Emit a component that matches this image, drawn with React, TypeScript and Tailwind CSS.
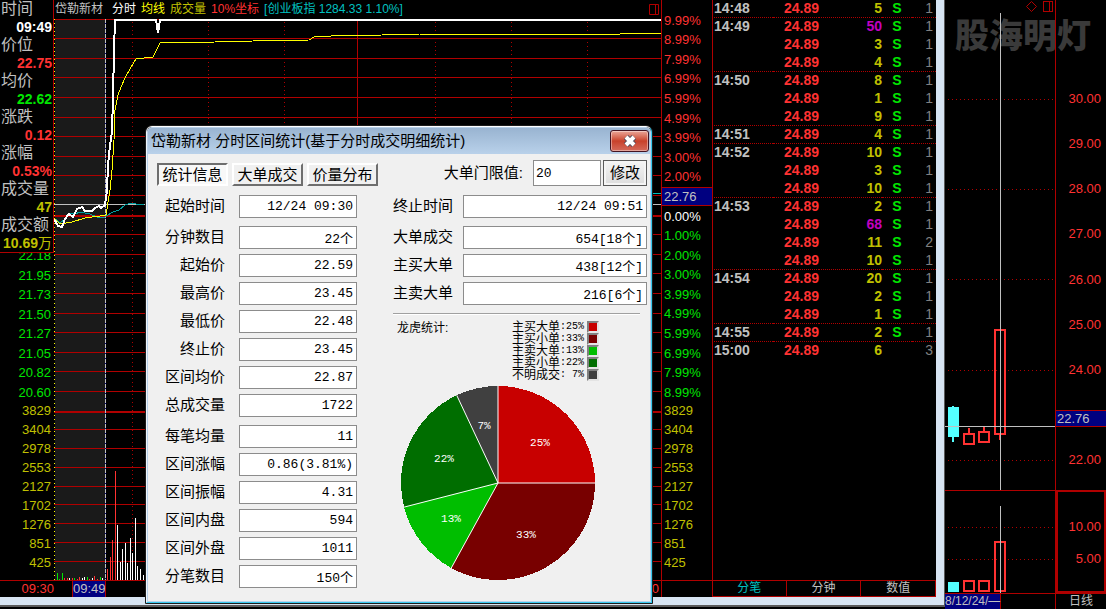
const pctLabels = [
  { text: '9.99%', tone: 'text-[#ff3232]' },
  { text: '8.99%', tone: 'text-[#ff3232]' },
  { text: '7.99%', tone: 'text-[#ff3232]' },
  { text: '6.99%', tone: 'text-[#ff3232]' },
  { text: '5.99%', tone: 'text-[#ff3232]' },
  { text: '4.99%', tone: 'text-[#ff3232]' },
  { text: '3.99%', tone: 'text-[#ff3232]' },
  { text: '3.00%', tone: 'text-[#ff3232]' },
  { text: '2.00%', tone: 'text-[#ff3232]' },
  { text: '22.76', tone: 'border-y border-[#b00000] bg-[#000080] text-[#c0c0c0]' },
  { text: '0.00%', tone: 'text-white' },
  { text: '1.00%', tone: 'text-[#00e600]' },
  { text: '2.00%', tone: 'text-[#00e600]' },
  { text: '3.00%', tone: 'text-[#00e600]' },
  { text: '3.99%', tone: 'text-[#00e600]' },
  { text: '4.99%', tone: 'text-[#00e600]' },
  { text: '5.99%', tone: 'text-[#00e600]' },
  { text: '6.99%', tone: 'text-[#00e600]' },
  { text: '7.99%', tone: 'text-[#00e600]' },
  { text: '8.99%', tone: 'text-[#00e600]' },
];

const lowPrices = ['21.95', '21.73', '21.50', '21.27', '21.05', '20.82', '20.60'];
const volLabels = ['3829', '3404', '2978', '2553', '2127', '1702', '1276', '851', '425'];

const quote = [
  { label: '时间', value: '09:49', unit: '', tone: 'text-white' },
  { label: '价位', value: '22.75', unit: '', tone: 'text-[#ff3232]' },
  { label: '均价', value: '22.62', unit: '', tone: 'text-[#00e600]' },
  { label: '涨跌', value: '0.12', unit: '', tone: 'text-[#ff3232]' },
  { label: '涨幅', value: '0.53%', unit: '', tone: 'text-[#ff3232]' },
  { label: '成交量', value: '47', unit: '', tone: 'text-[#c0c000]' },
  { label: '成交额', value: '10.69', unit: '万', tone: 'text-[#c0c000]' },
];

// time, volume, side, count, last row of its minute
const ticks: [string, number, string, number, boolean][] = [
  ['14:48', 5, 'S', 1, true],
  ['14:49', 50, 'S', 1, false],
  ['', 3, 'S', 1, false],
  ['', 4, 'S', 1, true],
  ['14:50', 8, 'S', 1, false],
  ['', 1, 'S', 1, false],
  ['', 9, 'S', 1, true],
  ['14:51', 4, 'S', 1, true],
  ['14:52', 10, 'S', 1, false],
  ['', 3, 'S', 1, false],
  ['', 10, 'S', 1, true],
  ['14:53', 2, 'S', 1, false],
  ['', 68, 'S', 1, false],
  ['', 11, 'S', 2, false],
  ['', 10, 'S', 1, true],
  ['14:54', 20, 'S', 1, false],
  ['', 2, 'S', 1, false],
  ['', 1, 'S', 1, true],
  ['14:55', 2, 'S', 1, true],
  ['15:00', 6, '', 3, false],
];

const leftFields = [
  [['起始时间', '12/24 09:30']],
  [
    ['分钟数目', '22个'],
    ['起始价', '22.59'],
    ['最高价', '23.45'],
    ['最低价', '22.48'],
    ['终止价', '23.45'],
    ['区间均价', '22.87'],
    ['总成交量', '1722'],
  ],
  [
    ['每笔均量', '11'],
    ['区间涨幅', '0.86(3.81%)'],
    ['区间振幅', '4.31'],
    ['区间内盘', '594'],
    ['区间外盘', '1011'],
    ['分笔数目', '150个'],
  ],
];

const rightFields = [
  [['终止时间', '12/24 09:51']],
  [
    ['大单成交', '654[18个]'],
    ['主买大单', '438[12个]'],
    ['主卖大单', '216[6个]'],
  ],
];

const slices = [
  { name: '主买大单', pct: 25, color: '#c80000', swatch: 'bg-[#c80000]', x: 140, y: 58 },
  { name: '主买小单', pct: 33, color: '#780000', swatch: 'bg-[#780000]', x: 126, y: 150 },
  { name: '主卖大单', pct: 13, color: '#00be00', swatch: 'bg-[#00be00]', x: 51, y: 134 },
  { name: '主卖小单', pct: 22, color: '#006e00', swatch: 'bg-[#006e00]', x: 44, y: 74 },
  { name: '不明成交', pct: 7, color: '#404040', swatch: 'bg-[#404040]', x: 84, y: 41 },
];

const gridRows = [
  38, 58, 77, 97, 117, 136, 156, 175, 195, 234, 254, 273, 293, 313, 332, 352, 371, 391, 429, 448,
  467, 486, 504, 523, 542, 561,
];

// x, height, colour
const volumeBars: [number, number, string][] = [
  [57, 7, '#00e600'],
  [59, 1, '#00e600'],
  [62, 7, '#00e600'],
  [64, 2, '#ff3232'],
  [67, 2, '#ff3232'],
  [69, 2, '#ffffff'],
  [72, 2, '#ff3232'],
  [74, 2, '#00e600'],
  [77, 1, '#ff3232'],
  [79, 3, '#ff3232'],
  [82, 2, '#ffffff'],
  [84, 3, '#ffffff'],
  [87, 3, '#00e600'],
  [89, 1, '#ff3232'],
  [92, 2, '#ffffff'],
  [94, 4, '#ff3232'],
  [97, 1, '#ff3232'],
  [100, 3, '#00e600'],
  [102, 2, '#ffffff'],
  [107, 11, '#ff3232'],
  [110, 23, '#ff3232'],
  [112, 40, '#ff3232'],
  [115, 109, '#ff3232'],
  [117, 55, '#ffffff'],
  [120, 18, '#ffffff'],
  [122, 31, '#ffffff'],
  [125, 37, '#ffffff'],
  [127, 17, '#ffffff'],
  [130, 42, '#ffffff'],
  [132, 27, '#ffffff'],
  [135, 62, '#ffffff'],
  [137, 14, '#ffffff'],
  [140, 11, '#ffffff'],
  [143, 5, '#ffffff'],
];

const IntradayChart = () => (
  <svg
    viewBox="54 18 607 562"
    preserveAspectRatio="none"
    shapeRendering="crispEdges"
    className="block min-h-0 w-full flex-1"
  >
    <rect x="55" y="19" width="50" height="561" fill="#1a1a1a" />
    {gridRows.map((y) => (
      <rect key={y} x="54" y={y} width="607" height="1" fill="#b00000" />
    ))}
    <rect x="54" y="19" width="607" height="1" fill="#b00000" />
    <rect x="54" y="215" width="607" height="2" fill="#b00000" />
    <rect x="54" y="411" width="607" height="2" fill="#b00000" />
    <rect x="357" y="20" width="1" height="560" fill="#b00000" />
    {[132, 208, 284, 435, 511, 587].map((x) => (
      <line key={x} x1={x + 0.5} x2={x + 0.5} y1="22" y2="580" stroke="#b00000" strokeDasharray="1 3" />
    ))}
    {volumeBars.map(([x, h, color]) => (
      <rect key={x} x={x} y={580 - h} width="1" height={h} fill={color} />
    ))}
    <line x1="54.5" x2="54.5" y1="19" y2="580" stroke="#ffff00" strokeDasharray="1 3" />
    <rect x="105" y="19" width="1" height="561" fill="#000080" />
    <line x1="105.5" x2="105.5" y1="19" y2="580" stroke="#c0c0c0" strokeDasharray="4 1" />
    <rect x="54" y="204" width="607" height="1" fill="#c0c0c0" />
    <rect x="652" y="193" width="9" height="1" fill="#00c0c0" />
    <polyline
      fill="none"
      stroke="#00a0a0"
      points="54,218 60,223 64,220 70,213 75,214 80,212 90,214 97,217 103,218 108,215 113,212 119,210 125,205 131,203 136,204 144,204"
    />
    <polyline
      fill="none"
      stroke="#ffff00"
      points="54,218 60,224 72,222 85,218 100,216 106,215 110,190 112,170 114,140 115,110 118,95 121,87 125,78 130,69 136,59 153,57 158,47 160,43 215,42 253,41 309,40 314,37 331,36 382,35 420,34 620,34 661,33"
    />
    <polyline
      fill="none"
      stroke="#ffffff"
      strokeWidth="2"
      points="54,219 58,226 62,227 65,219 69,214 73,217 77,209 82,207 85,211 92,211 95,208 99,206 101,208 105,205 107,190 108,165 110,145 112,132 113,97 114,50 115,20 156,20 158,33 160,20 661,20"
    />
  </svg>
);

const DailyChart = () => (
  <svg
    viewBox="945 0 110 593"
    preserveAspectRatio="none"
    shapeRendering="crispEdges"
    className="block h-full min-w-0 flex-1"
  >
    {[99, 189, 279, 370, 460, 527, 559].map((y) => (
      <line key={y} x1="948" x2="1055" y1={y + 0.5} y2={y + 0.5} stroke="#b00000" strokeDasharray="1 3" />
    ))}
    <rect x="945" y="490" width="110" height="1" fill="#b00000" />
    <path d="M1031.5 1.5l5 5-5 5-5-5z" fill="none" stroke="#b00000" shapeRendering="auto" />
    <path d="M1043.5 1.5h9v10h-9zM1049.5 1.5v10" fill="none" stroke="#b00000" />
    <rect x="948" y="407" width="11" height="30" fill="#54ffff" />
    <rect x="952" y="406" width="2" height="36" fill="#54ffff" />
    <path
      d="M964 434h10v10h-10zM979 432h10v10h-10zM995 330h10v104h-10zM969 428v6M984 426v6M1000 434v6"
      fill="none"
      stroke="#ff3232"
      strokeWidth="2"
    />
    <rect x="948" y="582" width="11" height="10" fill="#54ffff" />
    <path
      d="M964 581h10v10h-10zM979 581h10v10h-10zM995 542h10v49h-10z"
      fill="none"
      stroke="#ff3232"
      strokeWidth="2"
    />
    <rect x="1000" y="13" width="1" height="477" fill="#c0c0c0" />
    <rect x="1000" y="506" width="1" height="87" fill="#c0c0c0" />
    <rect x="945" y="426" width="110" height="1" fill="#c0c0c0" />
  </svg>
);

const point = (pct: number) => {
  const a = (pct / 100) * Math.PI * 2;
  return `${98 + 97 * Math.sin(a)} ${98 - 97 * Math.cos(a)}`;
};

const Pie = () => {
  let start = 0;
  return (
    <svg viewBox="0 0 196 196" className="mt-1 ml-[7px] block w-[196px]">
      {slices.map((s) => {
        const from = start;
        start += s.pct;
        return (
          <path
            key={s.name}
            d={`M98 98L${point(from)}A97 97 0 0 1 ${point(start)}Z`}
            fill={s.color}
            shapeRendering="crispEdges"
          />
        );
      })}
      {[0, 25, 58, 71, 93].map((p) => (
        <path key={p} d={`M98 98L${point(p)}`} stroke="#ffffff" />
      ))}
      {slices.map((s) => (
        <text key={s.name} x={s.x} y={s.y + 3} textAnchor="middle" fill="#ffffff" className="font-['Liberation_Mono',monospace] text-[11px]">
          {s.pct}%
        </text>
      ))}
    </svg>
  );
};

type FieldsProps = { groups: string[][][]; labelClass: string; inputClass: string };

const Fields = ({ groups, labelClass, inputClass }: FieldsProps) => (
  <div className="flex flex-col gap-2">
    {groups.map((group, i) => (
      <div key={i} className="flex flex-col gap-[5px]">
        {group.map(([label, value]) => (
          <div key={label} className="flex h-[23px] items-center justify-between">
            <label htmlFor={`f-${label}-${i}`} className={labelClass}>
              {label}
            </label>
            <input
              id={`f-${label}-${i}`}
              readOnly
              value={value}
              className={`h-full border border-[#8c8c8c] bg-white pr-[3px] text-right font-['Liberation_Mono','Noto_Sans_CJK_SC',monospace] text-[13px] leading-4 outline-none ${inputClass}`}
            />
          </div>
        ))}
      </div>
    ))}
  </div>
);

const StatsDialog = () => (
  <div
    role="dialog"
    aria-labelledby="dlg-title"
    className="absolute top-[125px] left-[145px] z-10 w-[508px] rounded-t-[7px] border border-[#1c1c1c] text-[15px] text-black"
  >
    <div className="rounded-t-[6px] border border-t-white border-r-[#35c8ee] border-b-[#35c8ee] border-l-[#eef5fc]">
      <div className="rounded-t-[5px] border border-[#b9d1ea] bg-[#f0f0f0]">
        <div className="flex h-[26px] items-center justify-between rounded-t-[4px] bg-linear-to-b from-[#99b4d1] to-[#b9d1ea] pr-px pl-[3px]">
          <h2 id="dlg-title">岱勒新材 分时区间统计(基于分时成交明细统计)</h2>
          <button
            aria-label="关闭"
            className="flex h-[22px] w-[39px] items-center justify-center rounded-[3px] border border-[#431422] bg-linear-to-b from-[#e9a698] via-[#c8402a] via-50% to-[#d4695a] shadow-[inset_0_0_0_1px_rgba(255,255,255,0.4)]"
          >
            <svg viewBox="0 0 16 14" className="h-[14px] w-4">
              <path d="M4 3l8 8M12 3l-8 8" stroke="#4a4a5c" strokeWidth="6" />
              <path d="M4 3l8 8M12 3l-8 8" stroke="#ffffff" strokeWidth="4" />
            </svg>
          </button>
        </div>
        <div className="pt-[6px] pr-[3px] pb-[13px] pl-[9px]">
          <div className="flex items-end justify-between">
            <div className="flex gap-1">
              <button className="h-[23px] w-[71px] border-2 border-t-[#6e6e6e] border-r-white border-b-white border-l-[#6e6e6e] bg-[#f8f8f8] leading-[18px]">
                统计信息
              </button>
              <button className="h-[23px] w-[71px] border-2 border-t-white border-r-[#6e6e6e] border-b-[#6e6e6e] border-l-white leading-[18px]">
                大单成交
              </button>
              <button className="h-[23px] w-[71px] border-2 border-t-white border-r-[#6e6e6e] border-b-[#6e6e6e] border-l-white leading-[18px]">
                价量分布
              </button>
            </div>
            <div className="flex h-[26px] items-center">
              <label htmlFor="limit" className="mr-[10px]">
                大单门限值:
              </label>
              <input
                id="limit"
                defaultValue="20"
                className="mr-[2px] h-[26px] w-[68px] border border-[#8c8c8c] bg-white px-[2px] font-['Liberation_Mono',monospace] text-[13px] outline-none"
              />
              <button className="h-[26px] w-11 border border-[#5a5a5a] bg-linear-to-b from-[#f4f4f4] to-[#dcdcdc] leading-[20px] shadow-[inset_0_0_0_2px_#f4f4f4]">
                修改
              </button>
            </div>
          </div>
          <div className="mt-[9px] flex justify-between">
            <div className="w-[200px]">
              <Fields groups={leftFields} labelClass="w-[68px] text-right" inputClass="w-[118px]" />
            </div>
            <div className="w-[254px]">
              <Fields groups={rightFields} labelClass="w-[60px] text-left" inputClass="w-[184px]" />
              <hr className="mt-2 mr-[7px] border-t border-b border-t-[#a0a0a0] border-b-white" />
              <div className="mt-[6px] flex justify-between pr-12 pl-1 text-xs leading-3">
                <span className="py-px">龙虎统计:</span>
                <ul>
                  {slices.map((s) => (
                    <li key={s.name} className="flex h-3 items-center">
                      <span>{s.name}</span>
                      <span className="font-['Liberation_Mono',monospace] text-[10px]">:</span>
                      <span className="w-[18px] text-right font-['Liberation_Mono',monospace] text-[10px]">{s.pct}%</span>
                      <i className={`ml-[3px] size-3 border-2 border-t-[#808080] border-r-[#e4e4e4] border-b-[#e4e4e4] border-l-[#808080] ${s.swatch}`} />
                    </li>
                  ))}
                </ul>
              </div>
              <Pie />
            </div>
          </div>
        </div>
      </div>
    </div>
  </div>
);

const QuotePanel = () => (
  <aside className="flex w-[54px] shrink-0 flex-col">
    <dl className="h-[253px] border-r border-b border-[#b00000]">
      {quote.map((q) => (
        <div key={q.label} className="whitespace-nowrap">
          <dt className="pl-px text-base leading-[18px] text-[#c0c0c0]">{q.label}</dt>
          <dd className={`flex justify-end pr-px text-sm leading-[18px] font-bold ${q.tone}`}>
            {q.value}
            <span className="font-normal">{q.unit}</span>
          </dd>
        </div>
      ))}
    </dl>
    <div className="flex min-h-0 flex-[149_1_0px] flex-col justify-between pr-[3px] text-right text-[#00e600]">
      <span className="flex h-3 items-end justify-end overflow-hidden leading-[19px]">22.18</span>
      {lowPrices.map((p) => (
        <span key={p} className="h-[19px] leading-[19px]">
          {p}
        </span>
      ))}
    </div>
    <div className="flex min-h-0 flex-[170_1_0px] flex-col justify-between pr-[3px] pb-2 text-right text-[#c0c000]">
      {volLabels.map((v) => (
        <span key={v} className="h-[18px] leading-[18px]">
          {v}
        </span>
      ))}
    </div>
  </aside>
);

const TickList = () => (
  <div className="w-[224px] shrink-0 border-l border-[#b00000] pl-px font-bold">
    <table className="w-full table-fixed border-separate border-spacing-0 text-sm leading-[17px]">
      <colgroup>
        <col className="w-[59px]" />
        <col className="w-[46px]" />
        <col className="w-[63px]" />
        <col className="w-[30px]" />
        <col />
      </colgroup>
      <tbody>
        {ticks.map(([time, vol, side, count, last], i) => (
          <tr
            key={i}
            className={
              last
                ? '*:border-b *:border-dotted *:border-[#b00000]'
                : '*:border-b *:border-transparent'
            }
          >
            <td className="h-[18px] text-[#c0c0c0]">{time}</td>
            <td className="text-right text-[#ff3232]">24.89</td>
            <td className={vol >= 50 ? 'text-right text-[#c000c0]' : 'text-right text-[#c0c000]'}>{vol}</td>
            <td className="text-center text-[#00e600]">{side}</td>
            <td className="pr-[3px] text-right font-normal text-[#808080]">{count}</td>
          </tr>
        ))}
      </tbody>
    </table>
  </div>
);

const DailyPanel = () => (
  <section className="relative flex w-[161px] shrink-0 flex-col">
    <div className="absolute top-3 left-[10px] text-[34px] leading-[48px] font-black whitespace-nowrap text-[#3a3a3a]">
      股海明灯
    </div>
    <div className="relative flex min-h-0 flex-1">
      <DailyChart />
      <div className="flex w-[51px] shrink-0 flex-col border-l border-[#b00000] text-right text-[#ff3232]">
        <div className="flex flex-[381_1_0px] flex-col justify-between pt-[89px] pr-[5px] pb-5">
          {['30.00', '29.00', '28.00', '27.00', '26.00', '25.00', '24.00', '', '22.00'].map((p) => (
            <span key={p} className="h-5 leading-5">
              {p}
            </span>
          ))}
        </div>
        <div className="flex flex-[83_1_0px] flex-col justify-end border-2 border-[#b00000] pr-[3px] pb-4">
          <span className="h-8 leading-8">10.00</span>
          <span className="h-8 leading-8">5.00</span>
        </div>
      </div>
      <div className="absolute top-[410px] right-0 h-[17px] w-[50px] border-y border-[#b00000] bg-[#000080] pl-px leading-[15px] text-[#c0c0c0]">
        22.76
      </div>
    </div>
    <div className="flex h-4 border-t border-[#b00000] text-xs leading-[15px] text-[#c0c0c0]">
      <span className="w-14 border-r border-[#b00000] bg-[#000080] whitespace-nowrap">8/12/24/—</span>
      <span className="flex-1" />
      <span className="w-[51px] border-l border-[#b00000] text-center">日线</span>
    </div>
  </section>
);

const App = () => {
  return (
    <div className="relative flex h-screen overflow-hidden bg-black font-['Liberation_Sans','Noto_Sans_CJK_SC',sans-serif] text-[13px]">
      <div className="flex min-w-0 flex-1 flex-col pb-[2px]">
        <div className="flex min-h-0 flex-1 border-r border-b-2 border-[#5a5a5a]">
          <main className="flex min-w-0 flex-1 flex-col border-r-8 border-b-8 border-[#d7e4f2]">
            <div className="flex min-h-0 flex-1">
              <QuotePanel />
              <section className="flex min-w-0 flex-1 flex-col">
                <header className="flex h-[18px] items-center justify-between pr-[2px] pl-px text-xs whitespace-nowrap">
                  <div className="flex gap-[5px]">
                    <span className="mr-1 text-[#c0c0c0]">岱勒新材</span>
                    <span className="text-white">分时</span>
                    <span className="text-[#ffff00]">均线</span>
                    <span className="text-[#c0c000]">成交量</span>
                    <span className="text-[#ff3232]">10%坐标</span>
                    <span className="text-[#00c0c0]">[创业板指 1284.33 1.10%]</span>
                  </div>
                  <svg viewBox="0 0 10 11" className="h-[11px] w-[10px]">
                    <path d="M.5.5h9v10h-9zM6.500.5v10" fill="none" stroke="#b00000" />
                  </svg>
                </header>
                <IntradayChart />
              </section>
              <div className="flex w-[51px] shrink-0 flex-col border-l border-[#b00000]">
                <div className="flex flex-[391_1_0px] flex-col justify-between pt-[11px]">
                  {pctLabels.map((p, i) => (
                    <span key={i} className={`flex h-[19px] items-center pl-[2px] ${p.tone}`}>
                      {p.text}
                    </span>
                  ))}
                </div>
                <div className="flex flex-[170_1_0px] flex-col justify-between pb-2 pl-[2px] text-[#c0c000]">
                  {volLabels.map((v) => (
                    <span key={v} className="h-[18px] leading-[18px]">
                      {v}
                    </span>
                  ))}
                </div>
              </div>
              <TickList />
            </div>
            <footer className="flex h-[17px] shrink-0 border-t border-[#b00000] leading-4 text-[#ff3232]">
              <span className="w-[72px] pr-[18px] text-right">09:30</span>
              <span className="w-[34px] border-x border-[#b00000] bg-[#000080] text-center text-[#c0c0c0]">09:49</span>
              <span className="flex-1 pr-[2px] text-right">15:00</span>
              <span className="w-[51px] border-l border-[#b00000]" />
              <nav className="grid w-[224px] grid-cols-3 border-b border-[#b00000] text-xs leading-[15px]">
                <button className="border-x border-[#b00000] text-[#00c0c0]">分笔</button>
                <button className="border-r border-[#b00000] text-[#c0c0c0]">分钟</button>
                <button className="border-r border-[#b00000] text-[#c0c0c0]">数值</button>
              </nav>
            </footer>
          </main>
        </div>
      </div>
      <DailyPanel />
      <StatsDialog />
    </div>
  );
};

export default App;
